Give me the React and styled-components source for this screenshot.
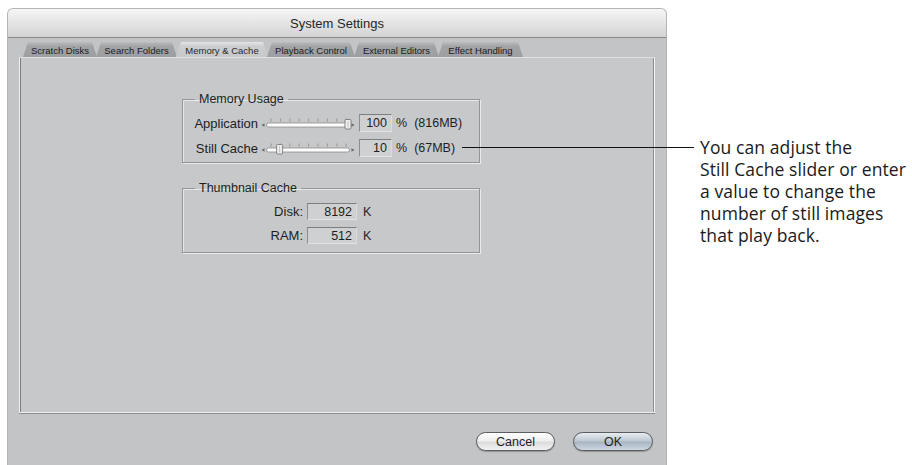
import React from "react";
import styled, { createGlobalStyle } from "styled-components";

const GlobalStyle = createGlobalStyle`
  html, body {
    margin: 0;
    padding: 0;
    background: #ffffff;
  }
  body {
    font-family: "Liberation Sans", Arial, sans-serif;
    color: #1e1e1e;
  }
`;

const tabs = [
  { label: "Scratch Disks", width: 74 },
  { label: "Search Folders", width: 81 },
  { label: "Memory & Cache", width: 92, active: true },
  { label: "Playback Control", width: 88 },
  { label: "External Editors", width: 85 },
  { label: "Effect Handling", width: 85 },
];

const Slider = ({ value }) => {
  const x0 = 8;
  const x1 = 84;
  const tx = x0 + (x1 - x0) * value;
  const ticks = Array.from({ length: 9 }, (_, i) => x0 + 2 + i * 9.4);
  return (
    <SliderSvg width="94" height="16" viewBox="0 0 94 16">
      <path d="M0.5 10 L3.5 8.3 L3.5 11.7 Z" fill="#6a6a6a" />
      {ticks.map((t) => (
        <line key={t} x1={t} y1="3.5" x2={t} y2="6.5" stroke="#8c8c8c" strokeWidth="0.8" />
      ))}
      <rect x="5.5" y="8" width="83" height="4" rx="2" fill="#fdfdfd" stroke="#8a8a8a" strokeWidth="0.8" />
      <g transform={`translate(${tx} 0)`}>
        <path
          d="M0 5.5 Q0 4.5 1 4.5 L5 4.5 Q6 4.5 6 5.5 L6 13 Q6 14 5 14 L1 14 Q0 14 0 13 Z"
          fill="#eeeeee"
          stroke="#6d6d6d"
          strokeWidth="0.8"
        />
        <line x1="3" y1="6" x2="3" y2="12.5" stroke="#b8b8b8" strokeWidth="0.8" />
      </g>
      <path d="M90.5 8.3 L93.5 10 L90.5 11.7 Z" fill="#6a6a6a" />
    </SliderSvg>
  );
};

export default function App() {
  return (
    <>
      <GlobalStyle />
      <Page>
        <Window>
          <TitleBar>System Settings</TitleBar>
          <WindowBody>
            <TabRow>
              {tabs.map((t) => (
                <Tab key={t.label} $active={t.active} $width={t.width}>
                  {t.label}
                </Tab>
              ))}
            </TabRow>
            <Panel>
              <Group>
                <Legend>Memory Usage</Legend>
                <MemoryGrid>
                  <Label>Application</Label>
                  <Slider value={1} />
                  <ValueBox $width={33}>100</ValueBox>
                  <Unit>%</Unit>
                  <Unit>(816MB)</Unit>

                  <Label>Still Cache</Label>
                  <Slider value={0.1} />
                  <ValueBox $width={33}>10</ValueBox>
                  <Unit>%</Unit>
                  <Unit>(67MB)</Unit>
                </MemoryGrid>
              </Group>
              <Group $thumb>
                <Legend>Thumbnail Cache</Legend>
                <ThumbGrid>
                  <Label>Disk:</Label>
                  <ValueBox $width={50} $height={17}>8192</ValueBox>
                  <Unit>K</Unit>

                  <Label>RAM:</Label>
                  <ValueBox $width={50} $height={17}>512</ValueBox>
                  <Unit>K</Unit>
                </ThumbGrid>
              </Group>
            </Panel>
            <ButtonRow>
              <PillButton>Cancel</PillButton>
              <PillButton $default>OK</PillButton>
            </ButtonRow>
          </WindowBody>
        </Window>
        <Callout>
          <Leader />
          You can adjust the
          <br />
          Still Cache slider or enter
          <br />
          a value to change the
          <br />
          number of still images
          <br />
          that play back.
        </Callout>
      </Page>
    </>
  );
}

const Page = styled.div`
  display: flex;
  align-items: flex-start;
  width: 912px;
  height: 465px;
  overflow: hidden;
`;

const Window = styled.div`
  margin: 8px 0 0 7px;
  width: 660px;
  height: 457px;
  box-sizing: border-box;
  display: flex;
  flex-direction: column;
  background: #c3c4c6;
  border: 1px solid #b4b5b7;
  border-bottom: none;
  border-radius: 6px 6px 0 0;
  overflow: hidden;
`;

const TitleBar = styled.div`
  height: 28px;
  flex: none;
  display: flex;
  align-items: center;
  justify-content: center;
  font-size: 13px;
  color: #262626;
  background: linear-gradient(#f6f6f6, #e6e6e6 45%, #d3d3d3);
  border-bottom: 1px solid #8a8a8a;
`;

const WindowBody = styled.div`
  flex: 1;
  display: flex;
  flex-direction: column;
  padding: 4px 11px 0 11px;
`;

const TabRow = styled.div`
  display: flex;
  height: 15px;
  padding-left: 4px;
`;

const Tab = styled.div`
  width: ${({ $width }) => $width}px;
  height: 15px;
  box-sizing: border-box;
  display: flex;
  align-items: center;
  justify-content: center;
  padding-top: 1px;
  font-size: 9.5px;
  color: ${({ $active }) => ($active ? "#2a2a2a" : "#1c1c1c")};
  background: ${({ $active }) =>
    $active
      ? "linear-gradient(#e4e5e7, #cbcdcf 30%, #c6c8ca)"
      : "linear-gradient(#bdbdbf, #a2a3a5 30%, #9d9ea0)"};
  clip-path: polygon(5px 0, calc(100% - 5px) 0, 100% 100%, 0 100%);
  margin-right: -1px;
`;

const Panel = styled.div`
  height: 356px;
  box-sizing: border-box;
  background: #c6c8ca;
  border-top: 1px solid #dfe0e2;
  border-left: 1px solid #f2f2f2;
  border-right: 1px solid #f2f2f2;
  border-bottom: 1px solid #f0f0f0;
  box-shadow: inset -1px 0 0 #8e8e8e, 0 1px 0 #8a8a8a, inset 1px 0 0 #7c7c7c;
  padding: 34px 0 0 162px;
  display: flex;
  flex-direction: column;
  gap: 18px;
`;

const Group = styled.fieldset`
  margin: 0;
  width: 298px;
  box-sizing: border-box;
  border: 1px solid #949597;
  box-shadow: inset 1px 1px 0 #e6e7e8, 1px 1px 0 #eaeaea;
  padding: ${({ $thumb }) => ($thumb ? "8px 0 8px 0" : "8px 0 5px 0")};
`;

const Legend = styled.legend`
  margin-left: 12px;
  padding: 0 4px;
  font-size: 12.5px;
  line-height: 14px;
  color: #1e1e1e;
`;

const MemoryGrid = styled.div`
  display: grid;
  grid-template-columns: 75px 94px 33px max-content max-content;
  justify-content: start;
  column-gap: 3px;
  row-gap: 7px;
  align-items: center;

  & > :nth-child(5n + 3) {
    margin-left: 1px;
  }
  & > :nth-child(5n + 4) {
    margin-left: 2px;
  }
  & > :nth-child(5n) {
    margin-left: 4px;
  }
`;

const ThumbGrid = styled.div`
  display: grid;
  grid-template-columns: 120px 50px max-content;
  justify-content: start;
  column-gap: 4px;
  row-gap: 7px;
  align-items: center;

  & > :nth-child(3n) {
    margin-left: 2px;
  }
`;

const Label = styled.span`
  text-align: right;
  font-size: 13px;
  white-space: nowrap;
`;

const SliderSvg = styled.svg`
  display: block;
`;

const ValueBox = styled.div`
  width: ${({ $width }) => $width}px;
  height: ${({ $height }) => $height || 18}px;
  box-sizing: border-box;
  display: flex;
  align-items: center;
  justify-content: flex-end;
  padding-right: 4px;
  font-size: 12.5px;
  background: #cfd0d2;
  border-top: 1px solid #7d7e80;
  border-left: 1px solid #8c8d8f;
  border-right: 1px solid #dadbdc;
  border-bottom: 1px solid #e2e3e4;
`;

const Unit = styled.span`
  font-size: 12.5px;
  white-space: nowrap;
`;

const ButtonRow = styled.div`
  display: flex;
  justify-content: flex-end;
  gap: 18px;
  margin-top: 19px;
  padding-right: 2px;
`;

const PillButton = styled.button`
  width: ${({ $default }) => ($default ? 80 : 79)}px;
  height: 19px;
  padding: 0;
  font-family: "Liberation Sans", Arial, sans-serif;
  font-size: 12.5px;
  color: #1e1e1e;
  border-radius: 10px;
  border: 1px solid #5c5d60;
  background: ${({ $default }) =>
    $default
      ? "linear-gradient(#e9edf2, #bcc6d2 48%, #a9b4c2 52%, #cdd6e0)"
      : "linear-gradient(#ffffff, #eeeeee 48%, #dadada 52%, #f3f3f3)"};
  box-shadow: 0 1px 1px rgba(0, 0, 0, 0.25);
`;

const Callout = styled.div`
  position: relative;
  margin-top: 136px;
  padding-left: 33px;
  font-family: "Open Sans", "Noto Sans", sans-serif;
  font-size: 17.5px;
  line-height: 22px;
  letter-spacing: 0.1px;
  color: #1a1a1a;
  white-space: nowrap;
`;

const Leader = styled.div`
  position: absolute;
  left: -205px;
  top: 11px;
  width: 232px;
  height: 1px;
  background: #111;
`;
